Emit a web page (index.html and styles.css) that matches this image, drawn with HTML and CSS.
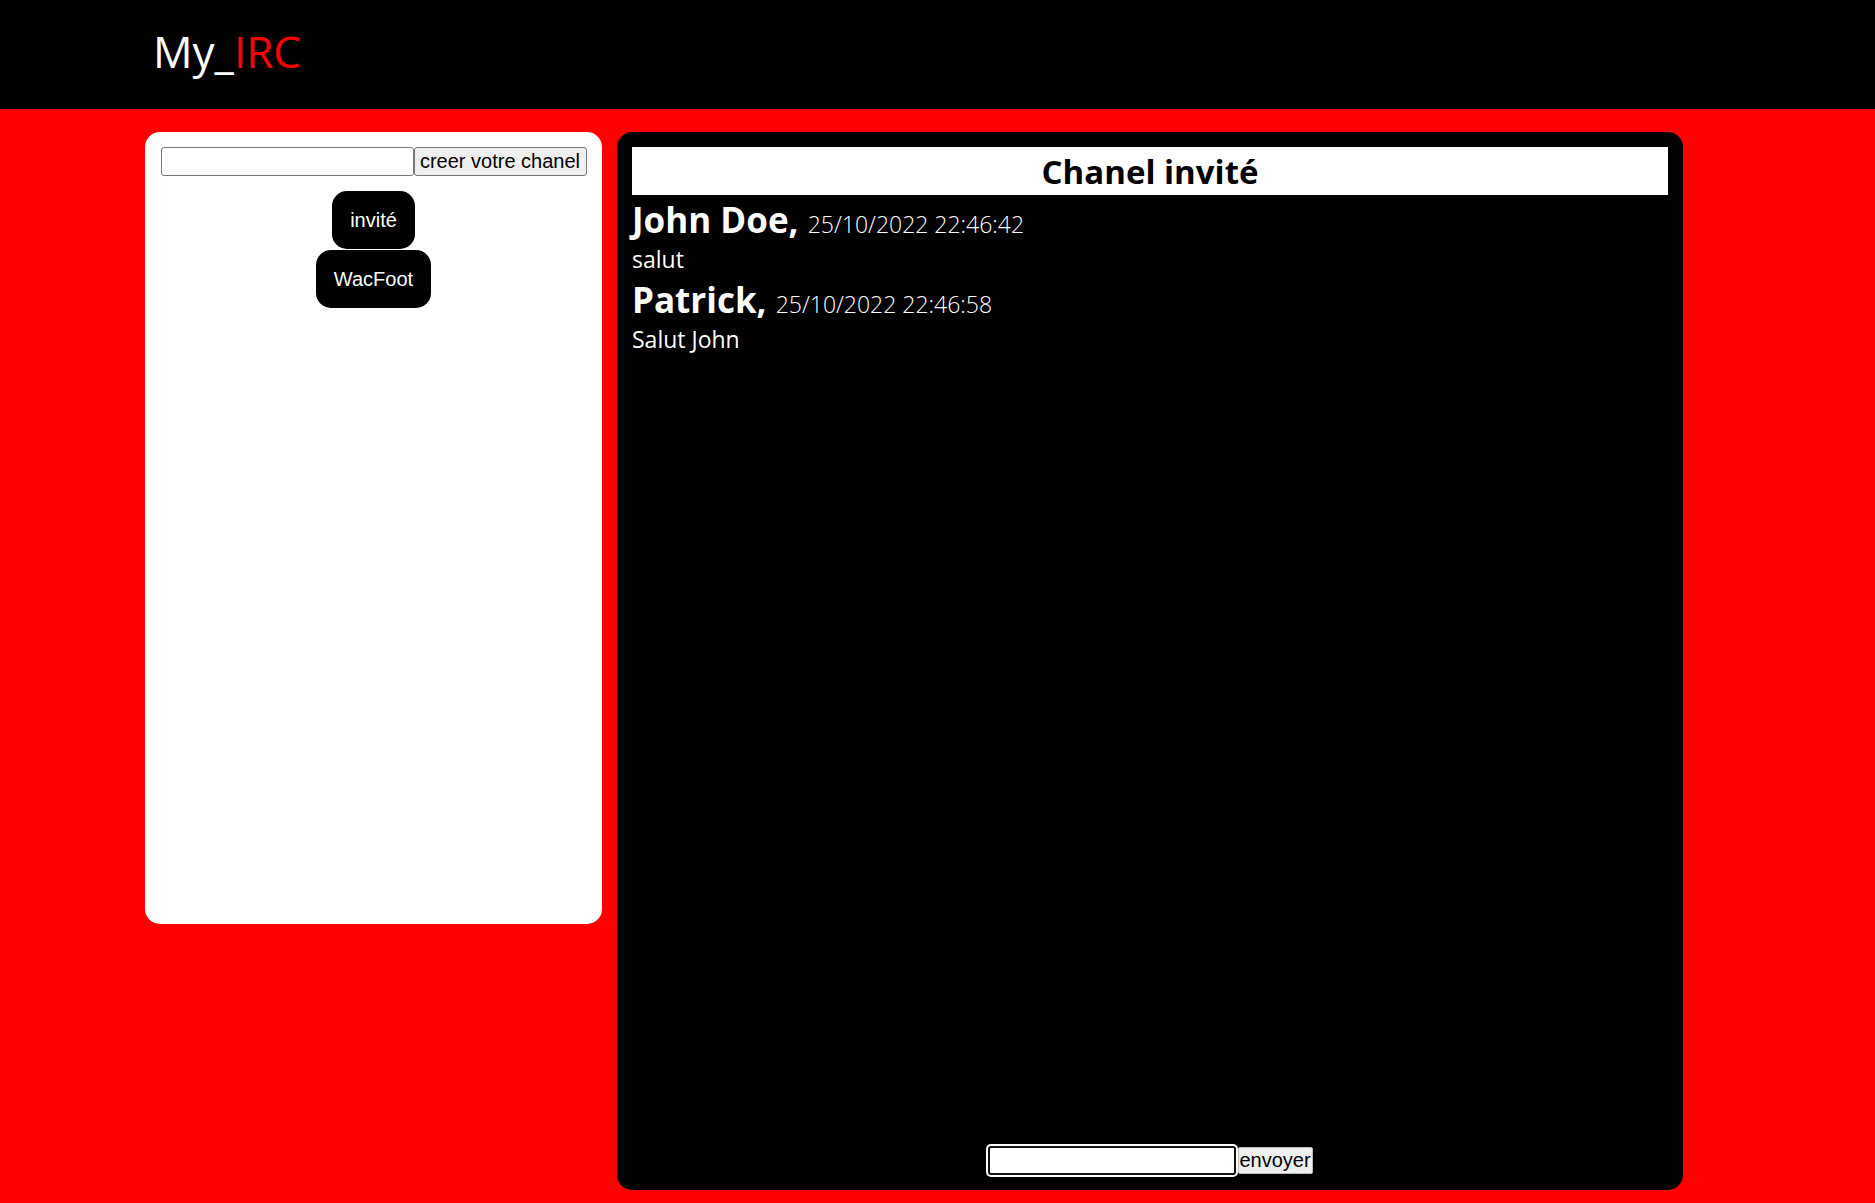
FILE: index.html
```
<!DOCTYPE html>
<html lang="fr">
<head>
<meta charset="utf-8">
<title>My_IRC</title>
<link rel="stylesheet" href="styles.css">
</head>
<body>
<header class="topbar">
  <h1 class="logo">My_<span class="logo-red">IRC</span></h1>
</header>
<main class="layout">
  <section class="channels">
    <form class="create-form">
      <input class="create-input" type="text">
      <button class="create-btn" type="button">creer votre chanel</button>
    </form>
    <div class="channel-list">
      <button class="channel" type="button">invité</button>
      <button class="channel" type="button">WacFoot</button>
    </div>
  </section>
  <section class="chat">
    <h2 class="chat-title">Chanel invité</h2>
    <div class="messages">
      <div class="message">
        <div class="msg-head"><span class="msg-author">John Doe, </span><span class="msg-date">25/10/2022 22:46:42</span></div>
        <div class="msg-text">salut</div>
      </div>
      <div class="message">
        <div class="msg-head"><span class="msg-author">Patrick, </span><span class="msg-date">25/10/2022 22:46:58</span></div>
        <div class="msg-text">Salut John</div>
      </div>
    </div>
    <form class="send-form">
      <input class="send-input" type="text">
      <button class="send-btn" type="button">envoyer</button>
    </form>
  </section>
</main>
</body>
</html>
```
FILE: styles.css
```
html, body {
  margin: 0;
  padding: 0;
}
body {
  background: #ff0000;
  font-family: "Open Sans", "Noto Sans", sans-serif;
  height: 1203px;
  overflow: hidden;
}
.topbar {
  background: #000;
  height: 109px;
  box-sizing: border-box;
  padding-left: 153px;
  padding-top: 19px;
}
.logo {
  margin: 0;
  font-size: 44px;
  font-weight: 400;
  line-height: 64px;
  color: #fff;
}
.logo-red {
  color: #ff0000;
}
.layout {
  display: flex;
  align-items: flex-start;
  gap: 15px;
  padding: 23px 0 0 145px;
}
.channels {
  width: 457px;
  height: 792px;
  box-sizing: border-box;
  background: #fff;
  border-radius: 15px;
  padding: 15px;
}
.create-form {
  display: flex;
  justify-content: center;
  margin: 0;
}
.create-input {
  width: 253px;
  height: 29px;
  box-sizing: border-box;
  border: 1px solid #767676;
  border-radius: 3px;
  margin: 0;
  padding: 0 3px;
}
.create-btn {
  width: 173px;
  height: 29px;
  box-sizing: border-box;
  margin: 0;
  padding: 0 4px;
  white-space: nowrap;
  background: #efefef;
  border: 1px solid #767676;
  border-radius: 3px;
  font-family: "Liberation Sans", Arial, sans-serif;
  font-size: 20px;
  color: #000;
}
.channel-list {
  margin-top: 15px;
  display: flex;
  flex-direction: column;
  align-items: center;
  gap: 1px;
}
.channel {
  height: 58px;
  padding: 0 18px;
  border: none;
  border-radius: 15px;
  background: #000;
  color: #fff;
  font-family: "Liberation Sans", Arial, sans-serif;
  font-size: 20px;
}
.chat {
  width: 1066px;
  height: 1058px;
  box-sizing: border-box;
  background: #000;
  border-radius: 15px;
  padding: 15px;
  display: flex;
  flex-direction: column;
  color: #fff;
}
.chat-title {
  margin: 0;
  background: #fff;
  color: #000;
  text-align: center;
  font-size: 33px;
  font-weight: 700;
  height: 48px;
  line-height: 50px;
}
.messages {
  flex: 1;
}
.msg-head {
  font-size: 35px;
  line-height: 50px;
  height: 48px;
  white-space: nowrap;
}
.msg-author {
  font-size: 35px;
  font-weight: 700;
}
.msg-date {
  font-size: 23px;
  font-weight: 300;
  color: #fff;
}
.msg-text {
  font-size: 23px;
  line-height: 33px;
  height: 32px;
}
.send-form {
  display: flex;
  justify-content: center;
  align-items: center;
  margin: 0;
}
.send-input {
  width: 248px;
  height: 29px;
  box-sizing: border-box;
  margin: 0 2px 0 0;
  border: 2px solid #101010;
  border-radius: 3px;
  box-shadow: 0 0 0 2px #fff;
  outline: none;
}
.send-btn {
  width: 75px;
  height: 27px;
  box-sizing: border-box;
  margin: 0;
  padding: 0;
  background: #efefef;
  border: 1px solid #bdbdbd;
  border-radius: 2px;
  font-family: "Liberation Sans", Arial, sans-serif;
  font-size: 20px;
  color: #000;
}
```
